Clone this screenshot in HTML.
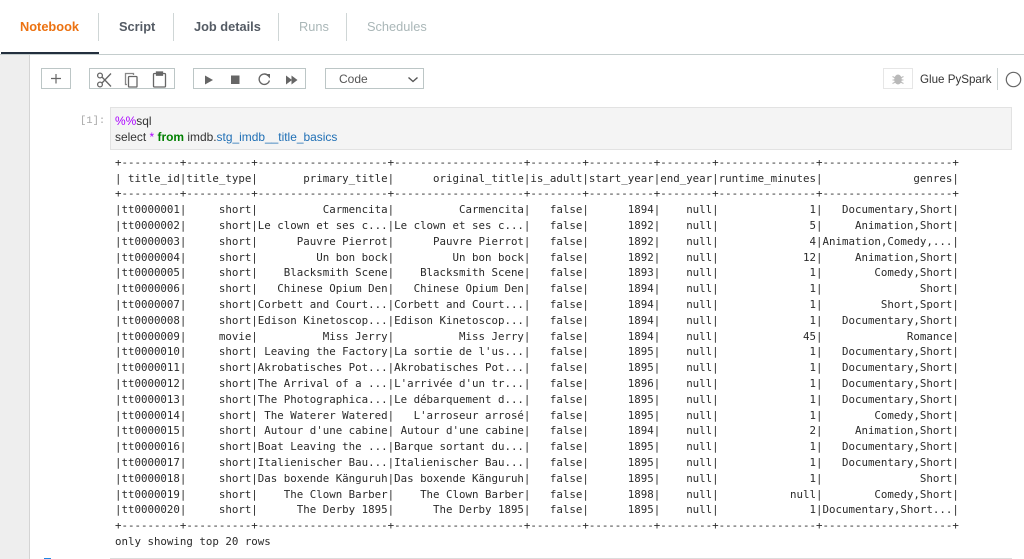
<!DOCTYPE html>
<html>
<head>
<meta charset="utf-8">
<style>
html,body{margin:0;padding:0;background:#fff}
#p{position:relative;width:1024px;height:559px;overflow:hidden;background:#fff;font-family:"Liberation Sans",sans-serif}
#p div,#p svg,#p pre{position:absolute}
.t{top:19px;font-size:12.800px;font-weight:bold;line-height:16px;white-space:nowrap}
.s{top:13px;width:1px;height:28px;background:#cfd6d6}
.b{top:68px;height:21px;border:1px solid #bcc6c6;box-sizing:border-box;background:#fff}
pre{margin:0;font-family:"DejaVu Sans Mono",monospace;font-size:10.790px;line-height:15.800px;color:#2a2a2a}
</style>
</head>
<body>
<div id="p">
<div style="left:0;top:54px;width:1024px;height:1px;background:#c4cdcd"></div>
<div style="left:1px;top:52px;width:98px;height:2px;background:#232f3e"></div>
<div class="t" style="left:20px;color:#ec7211">Notebook</div>
<div class="s" style="left:98px"></div>
<div class="t" style="left:119px;color:#545b64">Script</div>
<div class="s" style="left:173px"></div>
<div class="t" style="left:194px;color:#545b64">Job details</div>
<div class="s" style="left:278px"></div>
<div class="t" style="left:299px;color:#aab7b8;font-weight:normal">Runs</div>
<div class="s" style="left:346px"></div>
<div class="t" style="left:367px;color:#aab7b8;font-weight:normal">Schedules</div>

<div style="left:0;top:55px;width:29px;height:504px;background:#eeeeee"></div>
<div style="left:29px;top:55px;width:1px;height:504px;background:#d4d4d4"></div>

<div class="b" style="left:41px;width:30px"></div>
<svg style="left:41px;top:68px" width="30" height="21"><path d="M15 6v9.500M10 10.500h10" stroke="#666" stroke-width="1.200" fill="none"/></svg>
<div class="b" style="left:89px;width:86px"></div>
<svg style="left:89px;top:68px" width="86" height="21" fill="none" stroke="#666" stroke-width="1.300">
<circle cx="11" cy="16.500" r="2.400"/><circle cx="11" cy="7.500" r="2.400"/><path d="M13 9L22 18.500M13 15L22 5.500"/>
<path d="M38 16.500h-1.500v-11h8v1.500" stroke="#888"/><rect x="39.500" y="8.500" width="8.500" height="10.500" rx=".8"/>
<rect x="64.500" y="5.500" width="12" height="13.500" rx="1"/><rect x="67.500" y="4" width="6" height="3.200" fill="#666"/>
</svg>
<div class="b" style="left:193px;width:113px"></div>
<svg style="left:193px;top:68px" width="113" height="21" fill="#666">
<path d="M12 7.500l8 4.500-8 4.500z"/><rect x="38" y="7.500" width="8.500" height="8.500"/>
<path d="M75 7.500a5.200 5.200 0 1 0 1.400 5" fill="none" stroke="#666" stroke-width="1.400"/><path d="M72.500 6h4.500v4.500z"/>
<path d="M93 7.500l6 4.500-6 4.500zM98.500 7.500l6 4.500-6 4.500z"/>
</svg>
<div class="b" style="left:325px;width:99px"></div>
<div style="left:339px;top:72px;font-size:12px;line-height:15px;color:#555">Code</div>
<svg style="left:407px;top:76px" width="12" height="7"><path d="M1.500 1.500l4.500 4 4.500-4" fill="none" stroke="#555" stroke-width="1.400"/></svg>

<div class="b" style="left:883px;width:30px;border-color:#e6e6e6"></div>
<svg style="left:883px;top:68px" width="30" height="21"><ellipse cx="15" cy="11.500" rx="3.800" ry="5" fill="#b9b9b9"/><path d="M9.500 8.500l3 1.500M20.500 8.500l-3 1.500M9.500 12h11M9.500 15.500l3-1.500M20.500 15.500l-3-1.500" stroke="#b9b9b9" fill="none"/></svg>
<div style="left:920px;top:72px;font-size:11.600px;line-height:15px;color:#333">Glue PySpark</div>
<div style="left:997px;top:68px;width:1px;height:22px;background:#ccd3d3"></div>
<svg style="left:1005px;top:71px" width="17" height="17"><circle cx="8.500" cy="8.500" r="7.200" fill="none" stroke="#666" stroke-width="1.200"/></svg>

<div style="left:80px;top:114px;font-family:'Liberation Mono',monospace;font-size:10.500px;line-height:14px;color:#a8a8a8">[1]:</div>
<div style="left:110px;top:107px;width:902px;height:43px;background:#f4f4f4;border:1px solid #e2e2e2;box-sizing:border-box"></div>
<div style="left:115px;top:113px;font-size:11.950px;line-height:16px;color:#333;white-space:nowrap"><span style="color:#a0f">%%</span>sql<br>select <span style="color:#a0f">*</span> <b style="color:#008000">from</b> imdb.<span style="color:#1f6fb5">stg_imdb__title_basics</span></div>

<pre style="left:115px;top:154.800px">+---------+----------+--------------------+--------------------+--------+----------+--------+---------------+--------------------+
| title_id|title_type|       primary_title|      original_title|is_adult|start_year|end_year|runtime_minutes|              genres|
+---------+----------+--------------------+--------------------+--------+----------+--------+---------------+--------------------+
|tt0000001|     short|          Carmencita|          Carmencita|   false|      1894|    null|              1|   Documentary,Short|
|tt0000002|     short|Le clown et ses c...|Le clown et ses c...|   false|      1892|    null|              5|     Animation,Short|
|tt0000003|     short|      Pauvre Pierrot|      Pauvre Pierrot|   false|      1892|    null|              4|Animation,Comedy,...|
|tt0000004|     short|         Un bon bock|         Un bon bock|   false|      1892|    null|             12|     Animation,Short|
|tt0000005|     short|    Blacksmith Scene|    Blacksmith Scene|   false|      1893|    null|              1|        Comedy,Short|
|tt0000006|     short|   Chinese Opium Den|   Chinese Opium Den|   false|      1894|    null|              1|               Short|
|tt0000007|     short|Corbett and Court...|Corbett and Court...|   false|      1894|    null|              1|         Short,Sport|
|tt0000008|     short|Edison Kinetoscop...|Edison Kinetoscop...|   false|      1894|    null|              1|   Documentary,Short|
|tt0000009|     movie|          Miss Jerry|          Miss Jerry|   false|      1894|    null|             45|             Romance|
|tt0000010|     short| Leaving the Factory|La sortie de l'us...|   false|      1895|    null|              1|   Documentary,Short|
|tt0000011|     short|Akrobatisches Pot...|Akrobatisches Pot...|   false|      1895|    null|              1|   Documentary,Short|
|tt0000012|     short|The Arrival of a ...|L'arrivée d'un tr...|   false|      1896|    null|              1|   Documentary,Short|
|tt0000013|     short|The Photographica...|Le débarquement d...|   false|      1895|    null|              1|   Documentary,Short|
|tt0000014|     short| The Waterer Watered|   L'arroseur arrosé|   false|      1895|    null|              1|        Comedy,Short|
|tt0000015|     short| Autour d'une cabine| Autour d'une cabine|   false|      1894|    null|              2|     Animation,Short|
|tt0000016|     short|Boat Leaving the ...|Barque sortant du...|   false|      1895|    null|              1|   Documentary,Short|
|tt0000017|     short|Italienischer Bau...|Italienischer Bau...|   false|      1895|    null|              1|   Documentary,Short|
|tt0000018|     short|Das boxende Känguruh|Das boxende Känguruh|   false|      1895|    null|              1|               Short|
|tt0000019|     short|    The Clown Barber|    The Clown Barber|   false|      1898|    null|           null|        Comedy,Short|
|tt0000020|     short|      The Derby 1895|      The Derby 1895|   false|      1895|    null|              1|Documentary,Short...|
+---------+----------+--------------------+--------------------+--------+----------+--------+---------------+--------------------+
only showing top 20 rows</pre>

<div style="left:44px;top:558px;width:7px;height:1px;background:#1e88e5"></div>
<div style="left:110px;top:558px;width:902px;height:1px;background:#dcdcdc"></div>
</div>
</body>
</html>
